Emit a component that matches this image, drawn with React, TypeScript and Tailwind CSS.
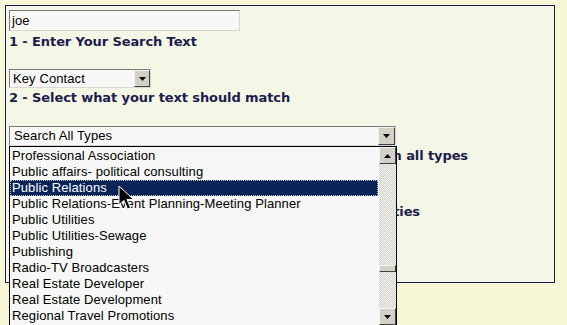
import React from 'react';

const ITEMS = [
  'Professional Association',
  'Public affairs- political consulting',
  'Public Relations',
  'Public Relations-Event Planning-Meeting Planner',
  'Public Utilities',
  'Public Utilities-Sewage',
  'Publishing',
  'Radio-TV Broadcasters',
  'Real Estate Developer',
  'Real Estate Development',
  'Regional Travel Promotions',
];

function ArrowBtn({ up, className = '' }: { up?: boolean; className?: string }) {
  return (
    <div
      className={`flex items-center justify-center bg-[#d4d0c8] border border-t-[#f4f4f0] border-l-[#f4f4f0] border-r-[#404040] border-b-[#404040] ${className}`}
    >
      <svg width="7" height="4" viewBox="0 0 7 4">
        {up ? <path d="M0 4 L3.5 0 L7 4 Z" fill="#000" /> : <path d="M0 0 L7 0 L3.5 4 Z" fill="#000" />}
      </svg>
    </div>
  );
}

const label = "text-[13px] leading-[16px] font-bold text-[#1c1c4e] font-['DejaVu_Sans',sans-serif] tracking-[-0.1px]";
const field = "font-['Liberation_Sans',Arial,sans-serif] text-[13px] tracking-[0.1px] text-black";

export default function App() {
  return (
    <div className="relative w-[567px] h-[325px] overflow-hidden bg-[#f7f7d6]">
      <div className="ml-[5px] mt-[5px] w-[550px] h-[278px] border border-[#1a1a50] bg-[#f5f7e6] pl-[3px] pt-[4px]">
        <div className={`w-[231px] h-[21px] bg-[#f8f8f8] border border-t-[#7a7a7a] border-l-[#7a7a7a] border-r-[#d8d8d0] border-b-[#d8d8d0] pl-[2px] leading-[19px] ${field}`}>
          joe
        </div>
        <div className={`mt-[3px] ${label}`}>1 - Enter Your Search Text</div>

        <div className={`mt-[19px] w-[142px] h-[19px] flex bg-[#f8f8f8] border border-t-[#7a7a7a] border-l-[#7a7a7a] border-r-[#d8d8d0] border-b-[#d8d8d0] ${field}`}>
          <div className="flex-1 pl-[3px] leading-[17px]">Key Contact</div>
          <ArrowBtn className="w-[16px] h-[17px]" />
        </div>
        <div className={`mt-[2px] ${label}`}>2 - Select what your text should match</div>

        <div className={`mt-[20px] w-[387px] h-[20px] flex bg-[#f8f8f8] border border-t-[#7a7a7a] border-l-[#7a7a7a] border-r-[#d8d8d0] border-b-[#d8d8d0] ${field}`}>
          <div className="flex-1 pl-[4px] leading-[18px]">Search All Types</div>
          <ArrowBtn className="w-[17px] h-[18px]" />
        </div>
        <div className={`mt-[2px] w-[459px] text-right ${label}`}>3 - Select a Type or search in all types</div>
        <div className={`mt-[40px] w-[411px] text-right ${label}`}>4 - Search Specialties</div>
      </div>

      <div className="absolute left-[9px] top-[146px] w-[388px] h-[180px] border border-black bg-[#f7f7f7] flex">
        <div className={`flex-1 pt-[1px] ${field}`}>
          {ITEMS.map((t, i) => (
            <div
              key={t}
              className={
                i === 2
                  ? 'h-[16px] leading-[14px] pl-[1px] bg-[#0a2458] text-white border border-dotted border-[#c0c0c0] mr-[1px]'
                  : 'h-[16px] leading-[16px] pl-[2px] whitespace-nowrap'
              }
            >
              {t}
            </div>
          ))}
        </div>
        <div className="w-[17px] flex flex-col bg-[repeating-conic-gradient(#d4d0c8_0_25%,#f4f4f0_0_50%)] bg-[length:2px_2px]">
          <ArrowBtn up className="w-[17px] h-[17px]" />
          <div className="flex-1 flex flex-col">
            <div className="h-[101px]" />
            <div className="h-[7px] bg-[#d4d0c8] border border-t-[#f4f4f0] border-l-[#f4f4f0] border-r-[#404040] border-b-[#404040]" />
          </div>
          <ArrowBtn className="w-[17px] h-[17px]" />
        </div>
      </div>

      <svg className="absolute left-[118px] top-[185px]" width="17" height="26" viewBox="0 0 17 26">
        <path d="M1 1 L1 20 L6 15.5 L9.5 24 L12.5 22.8 L9 14.5 L15.5 14.5 Z" fill="#000" stroke="#fff" strokeWidth="1" />
      </svg>
    </div>
  );
}
